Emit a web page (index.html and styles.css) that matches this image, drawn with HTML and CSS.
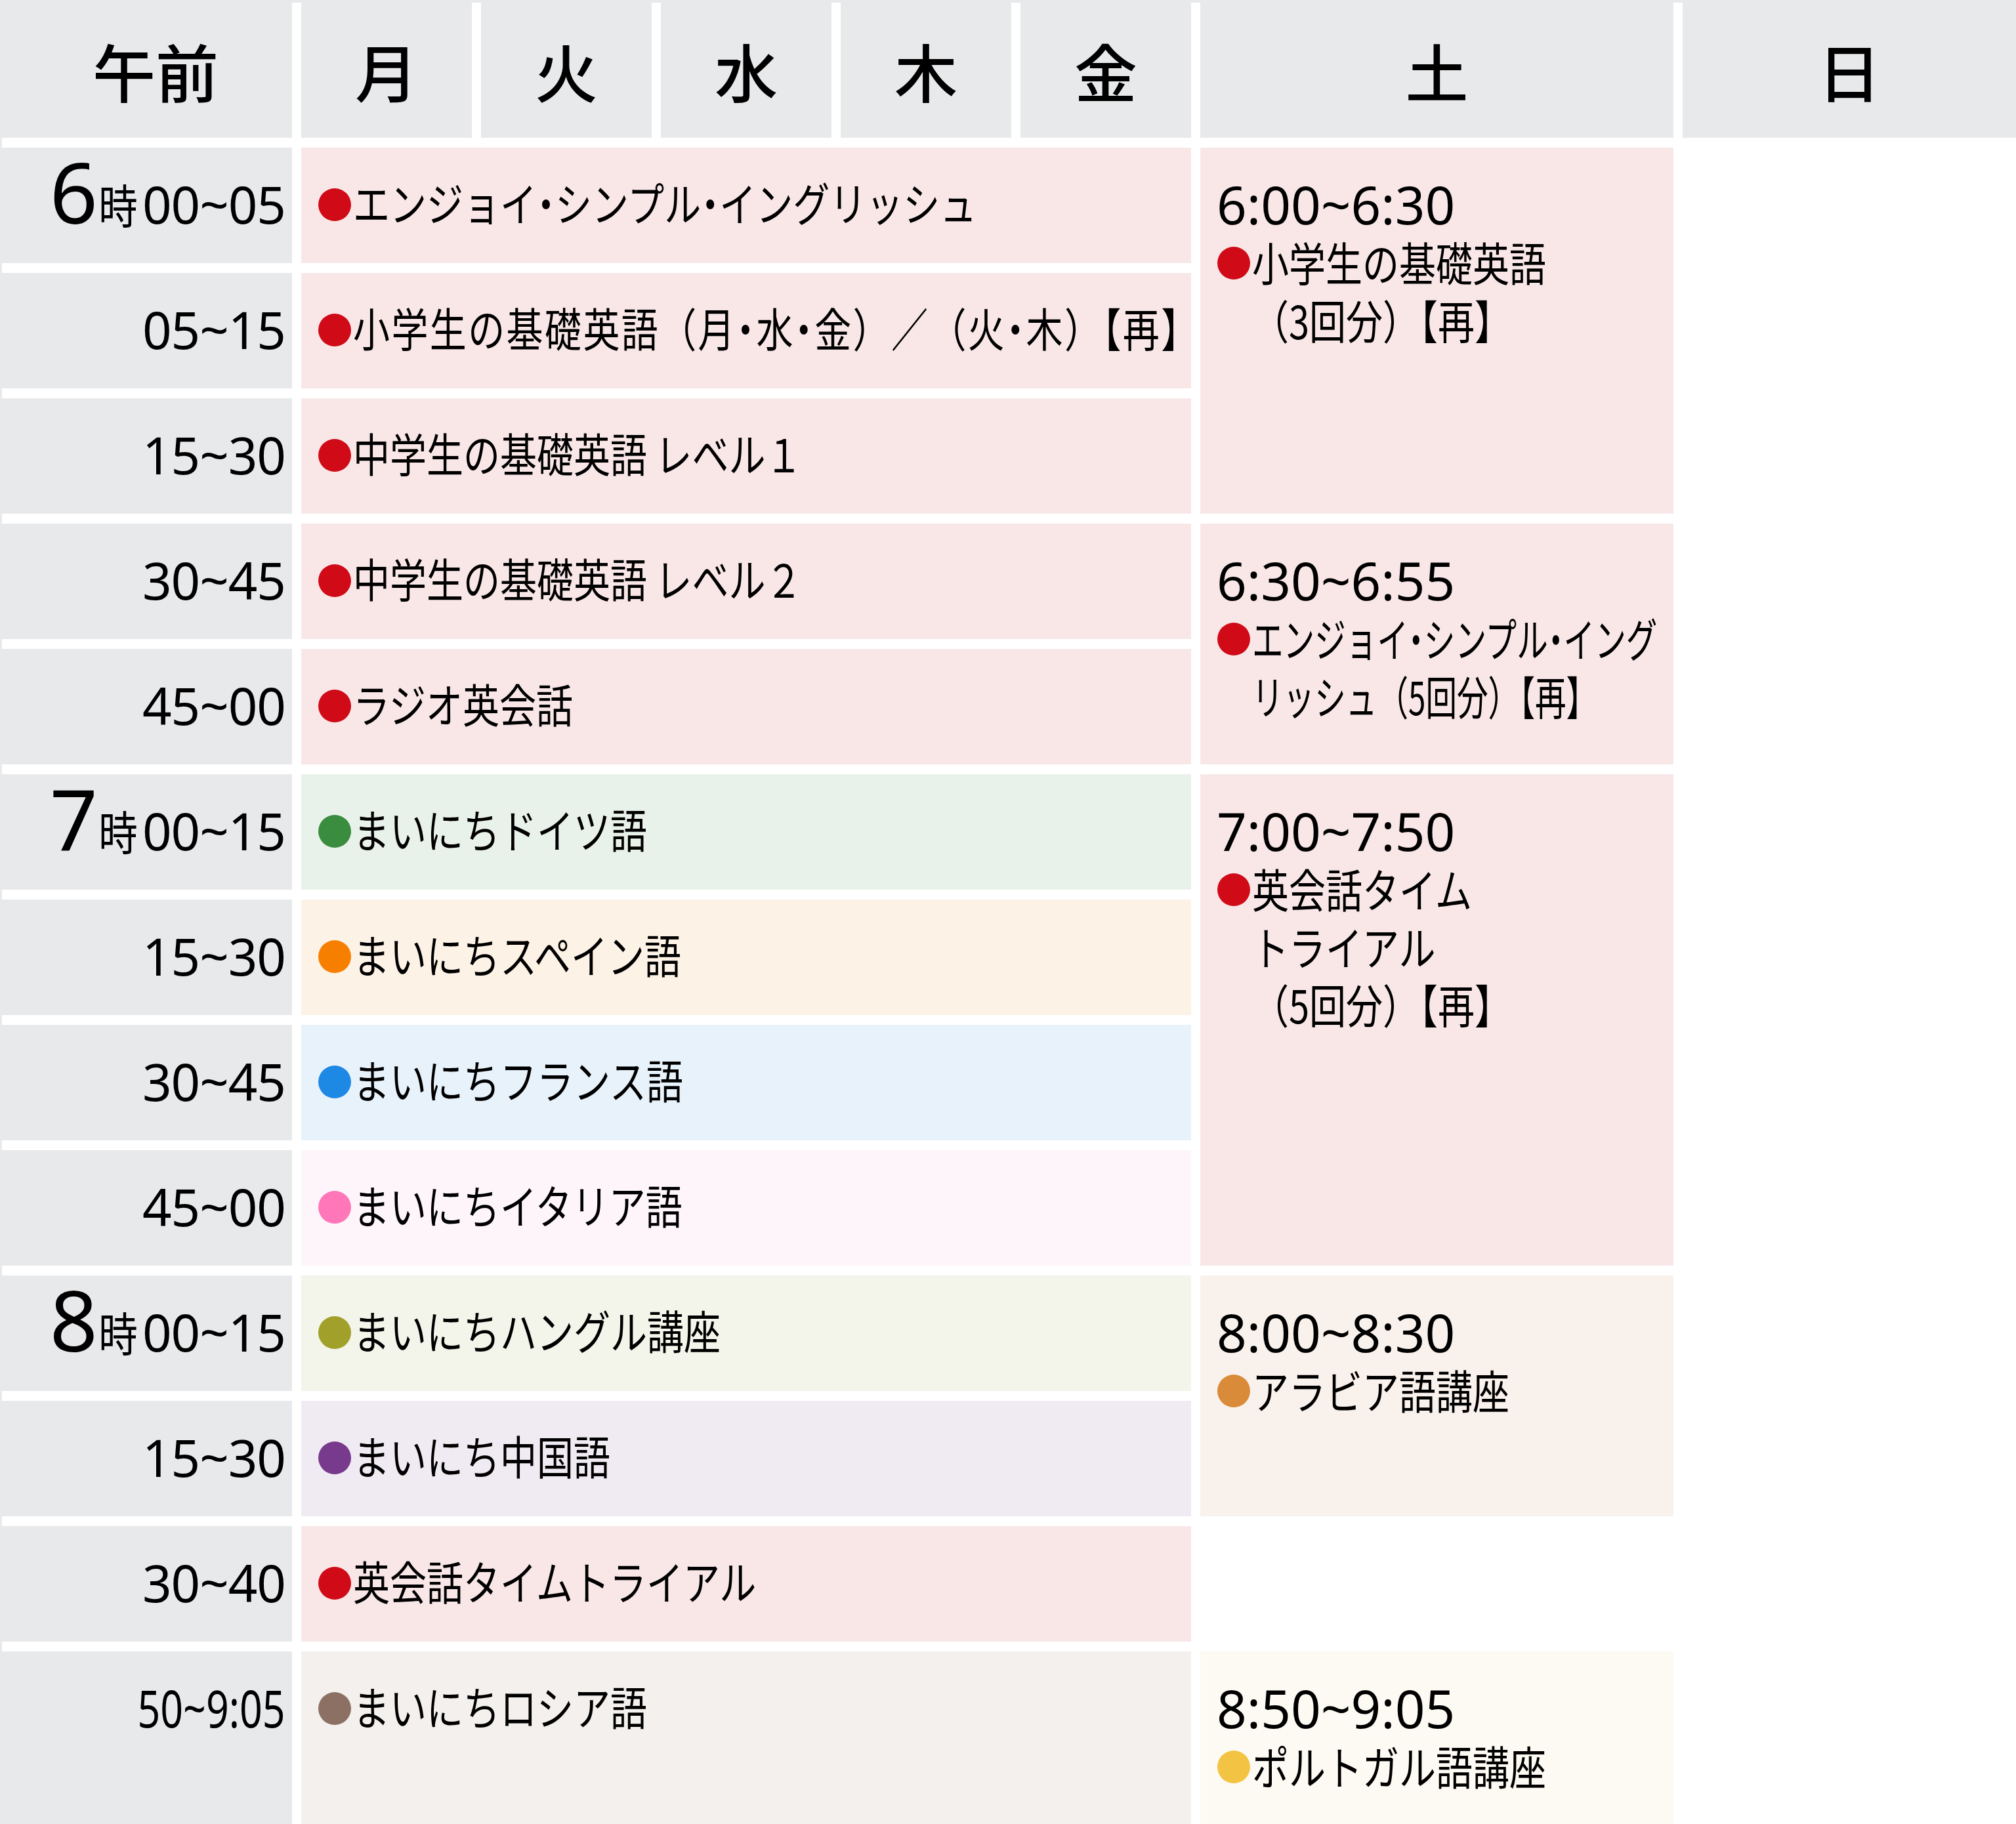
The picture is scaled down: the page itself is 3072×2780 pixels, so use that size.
FILE: index.html
```html
<!DOCTYPE html>
<html lang="ja">
<head>
<meta charset="utf-8">
<title>時間割</title>
<link rel="stylesheet" href="styles.css">
</head>
<body>
<div class="tt">
  <div class="hd hd-am">午前</div>
  <div class="hd">月</div>
  <div class="hd">火</div>
  <div class="hd">水</div>
  <div class="hd">木</div>
  <div class="hd">金</div>
  <div class="hd">土</div>
  <div class="hd">日</div>

  <div class="tm"><span class="hr">6</span><span class="ji">時</span><span class="mn">00~05</span></div>
  <div class="prog bg-pink"><span class="dot d-red"></span><span class="ptx">エンジョイ<span class="md">・</span>シンプル<span class="md">・</span>イングリッシュ</span></div>

  <div class="tm"><span class="mn">05~15</span></div>
  <div class="prog bg-pink"><span class="dot d-red"></span><span class="ptx ptx-wide">小学生の基礎英語（月<span class="md">・</span>水<span class="md">・</span>金）／（火<span class="md">・</span>木）【再】</span></div>

  <div class="tm"><span class="mn">15~30</span></div>
  <div class="prog bg-pink"><span class="dot d-red"></span><span class="ptx">中学生の基礎英語 レベル１</span></div>

  <div class="tm"><span class="mn">30~45</span></div>
  <div class="prog bg-pink"><span class="dot d-red"></span><span class="ptx">中学生の基礎英語 レベル２</span></div>

  <div class="tm"><span class="mn">45~00</span></div>
  <div class="prog bg-pink"><span class="dot d-red"></span><span class="ptx">ラジオ英会話</span></div>

  <div class="tm"><span class="hr">7</span><span class="ji">時</span><span class="mn">00~15</span></div>
  <div class="prog bg-green"><span class="dot d-green"></span><span class="ptx">まいにちドイツ語</span></div>

  <div class="tm"><span class="mn">15~30</span></div>
  <div class="prog bg-orange"><span class="dot d-orange"></span><span class="ptx">まいにちスペイン語</span></div>

  <div class="tm"><span class="mn">30~45</span></div>
  <div class="prog bg-blue"><span class="dot d-blue"></span><span class="ptx">まいにちフランス語</span></div>

  <div class="tm"><span class="mn">45~00</span></div>
  <div class="prog bg-lpink"><span class="dot d-pink"></span><span class="ptx">まいにちイタリア語</span></div>

  <div class="tm"><span class="hr">8</span><span class="ji">時</span><span class="mn">00~15</span></div>
  <div class="prog bg-olive"><span class="dot d-olive"></span><span class="ptx">まいにちハングル講座</span></div>

  <div class="tm"><span class="mn">15~30</span></div>
  <div class="prog bg-purple"><span class="dot d-purple"></span><span class="ptx">まいにち中国語</span></div>

  <div class="tm"><span class="mn">30~40</span></div>
  <div class="prog bg-pink"><span class="dot d-red"></span><span class="ptx">英会話タイムトライアル</span></div>

  <div class="tm"><span class="mn mn-tight">50~9:05</span></div>
  <div class="prog bg-brown"><span class="dot d-brown"></span><span class="ptx">まいにちロシア語</span></div>

  <div class="sat bg-pink sa1">
    <div class="st">6:00~6:30</div>
    <div class="sc"><span class="dot d-red"></span><span class="ptx">小学生の基礎英語<br>（3回分）【再】</span></div>
  </div>
  <div class="sat bg-pink sa2">
    <div class="st">6:30~6:55</div>
    <div class="sc"><span class="dot d-red"></span><span class="ptx ptx-tight">エンジョイ<span class="md">・</span>シンプル<span class="md">・</span>イング<br>リッシュ（5回分）【再】</span></div>
  </div>
  <div class="sat bg-pink sa3">
    <div class="st">7:00~7:50</div>
    <div class="sc"><span class="dot d-red"></span><span class="ptx">英会話タイム<br>トライアル<br>（5回分）【再】</span></div>
  </div>
  <div class="sat bg-arabic sa4">
    <div class="st">8:00~8:30</div>
    <div class="sc"><span class="dot d-arabic"></span><span class="ptx">アラビア語講座</span></div>
  </div>
  <div class="sat bg-portu sa5">
    <div class="st">8:50~9:05</div>
    <div class="sc"><span class="dot d-yellow"></span><span class="ptx">ポルトガル語講座</span></div>
  </div>
</div>
</body>
</html>
```
FILE: styles.css
```css
html, body {
  margin: 0;
  padding: 0;
  background: #ffffff;
}

body {
  font-family: "Noto Sans CJK JP", "Noto Sans", sans-serif;
  color: #000;
  overflow: hidden;
}

.tt {
  display: grid;
  width: 3072px;
  height: 2780px;
  box-sizing: border-box;
  border-top: 4px solid #e8e9eb;
  border-left: 3px solid #e8e9eb;
  grid-template-columns: 442px 260px 260px 260px 260px 260px 721px 1fr;
  grid-template-rows: 206px repeat(12, 176px) 1fr;
  column-gap: 14px;
  row-gap: 15px;
}

/* header */
.hd {
  grid-row: 1;
  background: #e8e9eb;
  display: flex;
  align-items: center;
  justify-content: center;
  font-family: "Noto Sans CJK JP", sans-serif;
  font-size: 96px;
  font-weight: 500;
  line-height: 1;
}
.hd-am {
  padding-left: 26px;
}

/* time column */
.tm {
  grid-column: 1;
  background: #e8e9eb;
  box-sizing: border-box;
  padding: 42px 10px 0 0;
  text-align: right;
  white-space: nowrap;
  font-family: "Noto Sans", sans-serif;
  font-size: 78px;
  line-height: 88px;
}
.mn {
  letter-spacing: -1px;
}
.mn-tight {
  display: inline-block;
  letter-spacing: 0;
  transform: scaleX(0.78);
  transform-origin: right center;
}
.hr {
  font-size: 128px;
  line-height: 0;
  margin-right: -4px;
}
.ji {
  display: inline-block;
  font-family: "Noto Sans CJK JP", sans-serif;
  font-size: 70px;
  line-height: 0;
  transform: scaleX(0.85);
  margin-right: 2px;
}

/* Mon-Fri programmes */
.prog {
  grid-column: 2 / span 5;
  box-sizing: border-box;
  padding: 39px 0 0 26px;
  display: flex;
  align-items: flex-start;
  font-family: "Noto Sans CJK JP", sans-serif;
  font-size: 70px;
  line-height: 88px;
  white-space: nowrap;
}

.dot {
  flex: none;
  width: 50px;
  height: 50px;
  border-radius: 50%;
  margin-top: 23px;
  margin-right: 3px;
}

.ptx {
  display: inline-block;
  transform: scaleX(0.8);
  transform-origin: left top;
  white-space: nowrap;
}
.ptx-tight {
  transform: scaleX(0.68);
}
.ptx-wide {
  letter-spacing: 3px;
}
.md {
  font-feature-settings: "halt";
}

/* Saturday */
.sat {
  grid-column: 7;
  box-sizing: border-box;
  padding: 42px 0 0 26px;
  font-family: "Noto Sans CJK JP", sans-serif;
  font-size: 70px;
  line-height: 88px;
}
.st {
  font-family: "Noto Sans", sans-serif;
  font-size: 80px;
  line-height: 88px;
  margin-left: -1px;
}
.sc {
  display: flex;
  align-items: flex-start;
  line-height: 88px;
}
.sc .dot {
  margin-top: 21px;
}

.sa1 { grid-row: 2 / span 3; }
.sa2 { grid-row: 5 / span 2; }
.sa3 { grid-row: 7 / span 4; }
.sa4 { grid-row: 11 / span 2; }
.sa5 { grid-row: 14; }

/* backgrounds */
.bg-pink { background: #f9e7e8; }
.bg-green { background: #e9f2ea; }
.bg-orange { background: #fdf2e6; }
.bg-blue { background: #e8f2fb; }
.bg-lpink { background: #fef5fa; }
.bg-olive { background: #f3f4ea; }
.bg-purple { background: #f0eaf2; }
.bg-brown { background: #f3f0ed; }
.bg-arabic { background: #f9f1ec; }
.bg-portu { background: #fdfaf3; }

/* dots */
.d-red { background: #d00a17; }
.d-green { background: #3a8c3f; }
.d-orange { background: #f77f00; }
.d-blue { background: #1e88e5; }
.d-pink { background: #ff77b8; }
.d-olive { background: #a0a02a; }
.d-purple { background: #773a8c; }
.d-brown { background: #8c7064; }
.d-arabic { background: #d98b3a; }
.d-yellow { background: #f3c443; }
```
